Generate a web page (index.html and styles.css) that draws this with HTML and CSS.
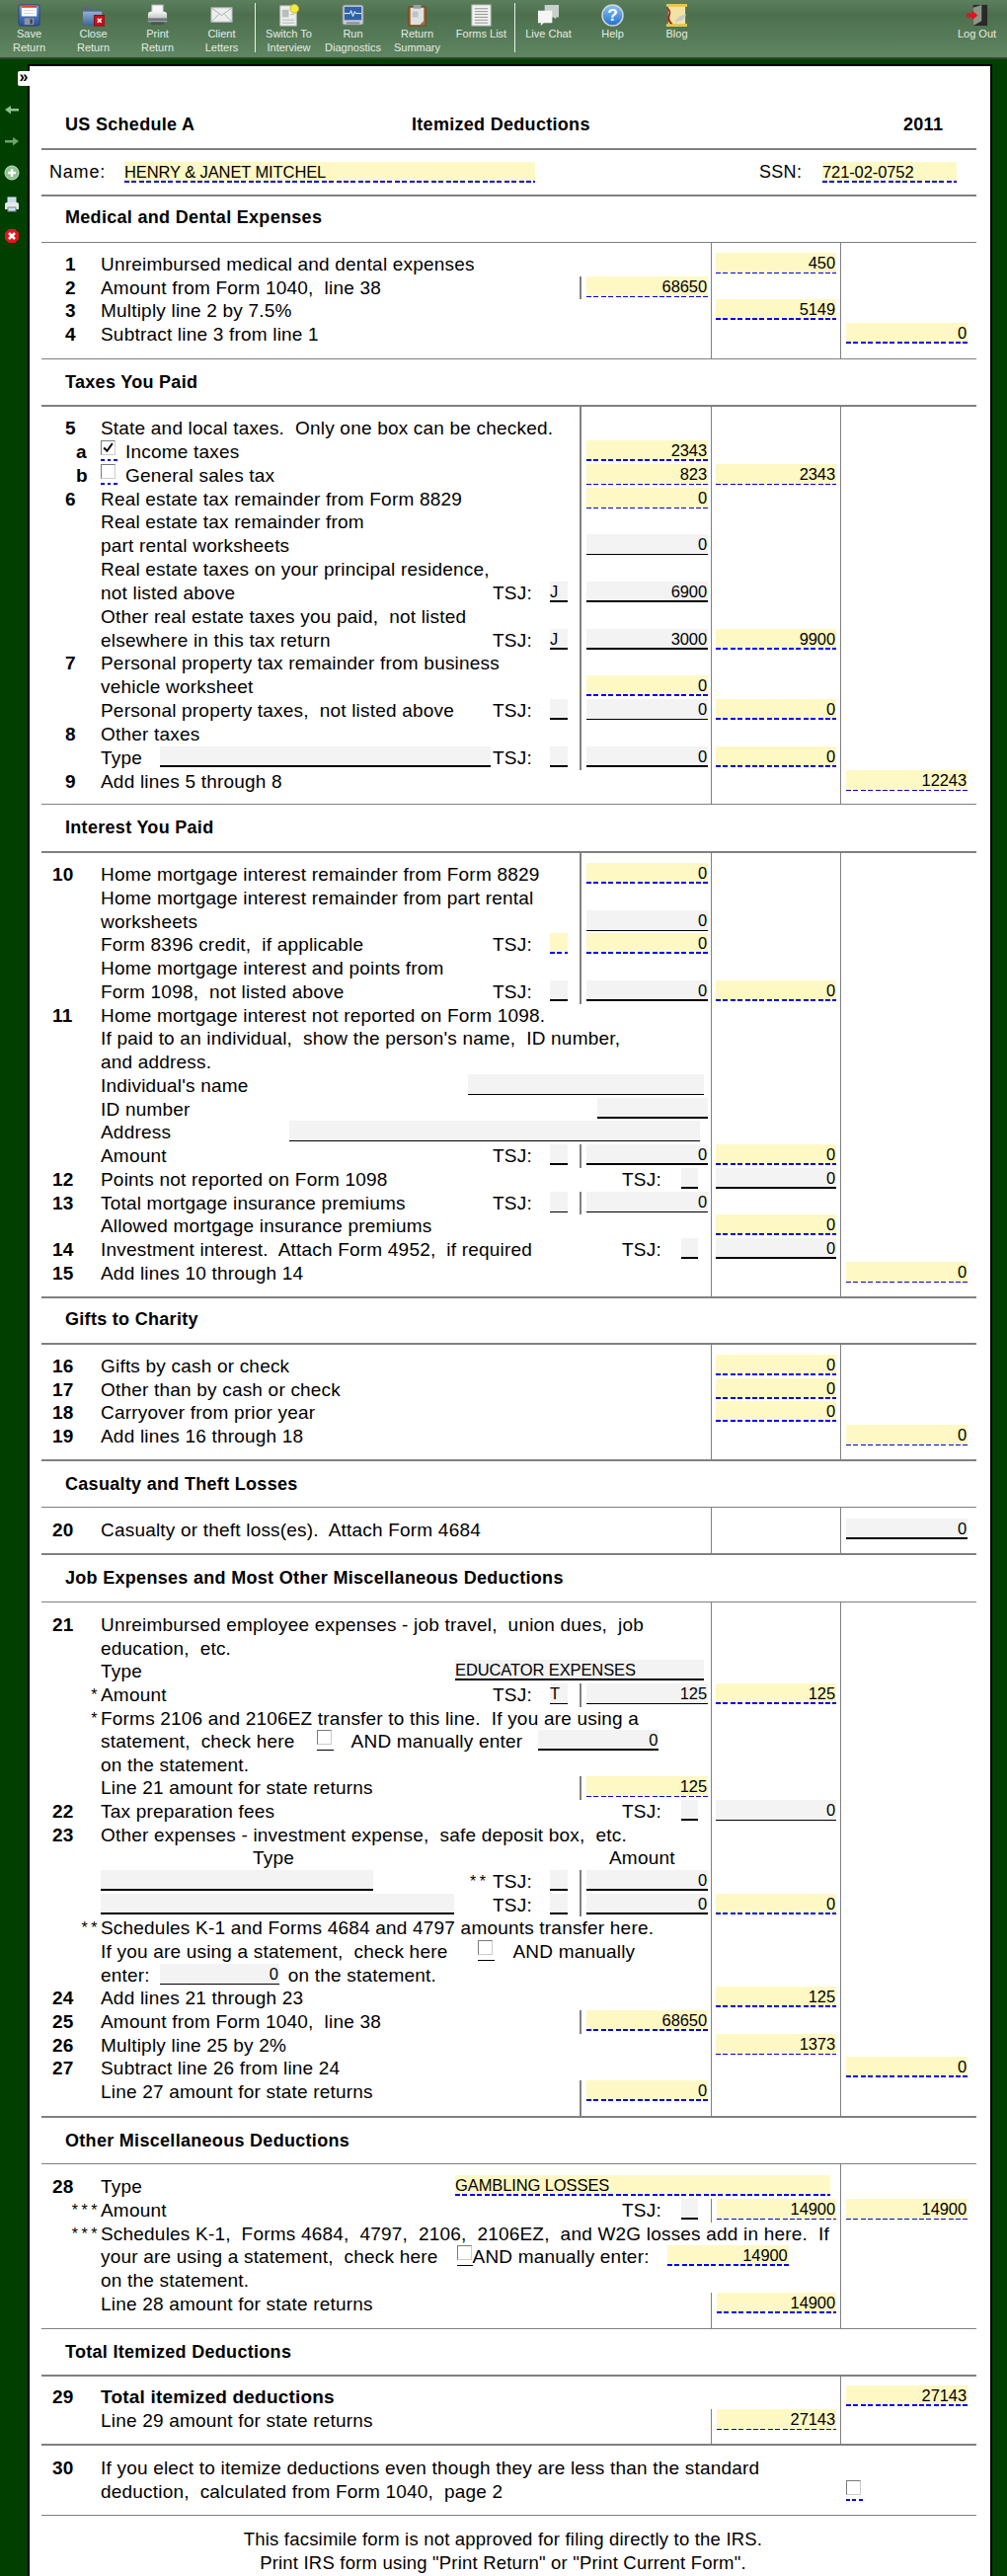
FILE: index.html
```html
<!DOCTYPE html>
<html lang="en">
<head>
<meta charset="utf-8">
<title>US Schedule A</title>
<link rel="stylesheet" href="styles.css">
</head>
<body>
<svg class="defs" width="0" height="0" aria-hidden="true">
  <defs>
    <linearGradient id="gBlue" x1="0" y1="0" x2="0" y2="1"><stop offset="0" stop-color="#6f9bd8"/><stop offset="1" stop-color="#2c4f96"/></linearGradient>
    <linearGradient id="gGrey" x1="0" y1="0" x2="0" y2="1"><stop offset="0" stop-color="#f4f4f4"/><stop offset="1" stop-color="#a9aeb0"/></linearGradient>
    <linearGradient id="gFolder" x1="0" y1="0" x2="0" y2="1"><stop offset="0" stop-color="#8fb0d8"/><stop offset="1" stop-color="#3f6496"/></linearGradient>
    <linearGradient id="gHelp" x1="0" y1="0" x2="0" y2="1"><stop offset="0" stop-color="#8cc4f2"/><stop offset="1" stop-color="#1f6fd0"/></linearGradient>
  </defs>
</svg>
<header class="toolbar">
  <div class="tool"><svg class="ticon" viewBox="0 0 24 24"><rect x="1" y="1" width="22" height="22" rx="2" fill="url(#gBlue)" stroke="#2a4478"/><rect x="4" y="2" width="16" height="11" fill="#fff"/><rect x="4" y="2" width="16" height="2" fill="#e0452f"/><path d="M6 7h12M6 10h12" stroke="#c9d2de"/><rect x="7" y="15" width="10" height="7" fill="#8f959c"/><rect x="13" y="16" width="2.5" height="5" fill="#3b4653"/></svg><span>Save<br>Return</span></div>
  <div class="tool"><svg class="ticon" viewBox="0 0 24 24"><path d="M1 5l1-2h7l2 3h9v4H1z" fill="#59677a"/><path d="M1 8h20v15H1z" fill="url(#gFolder)"/><rect x="13" y="12" width="11" height="11" fill="#c6121a" stroke="#7f0d12"/><path d="M16.5 15.5l4 4M20.500 15.500l-4 4" stroke="#fff" stroke-width="1.6"/></svg><span>Close<br>Return</span></div>
  <div class="tool"><svg class="ticon" viewBox="0 0 24 24"><rect x="6" y="1" width="12" height="8" fill="#f5f6f6" stroke="#aab"/><path d="M2 11q0-3 3-3h14q3 0 3 3v8H2z" fill="url(#gGrey)"/><rect x="2" y="15" width="20" height="3" fill="#6f7679"/><rect x="5" y="19" width="14" height="3" fill="#444d4f" opacity=".7"/></svg><span>Print<br>Return</span></div>
  <div class="tool"><svg class="ticon" viewBox="0 0 24 24"><rect x="1" y="4" width="22" height="15" fill="#eceeee" stroke="#b4babb"/><path d="M1 4l11 8 11-8M1 19l8-8M23 19l-8-8" fill="none" stroke="#a7adae"/></svg><span>Client<br>Letters</span></div>
  <i class="sep"></i>
  <div class="tool"><svg class="ticon" viewBox="0 0 24 24"><rect x="3" y="2" width="17" height="21" fill="#eef0ef" stroke="#c3c8c6"/><rect x="5" y="6" width="7" height="8" fill="#b9bebc"/><path d="M5 17h13M5 20h13M14 11h4" stroke="#c3c8c6" stroke-width="1.500"/><circle cx="18" cy="5" r="4.500" fill="#f3ec3a" stroke="#c4b92a"/></svg><span>Switch To<br>Interview</span></div>
  <div class="tool"><svg class="ticon" viewBox="0 0 24 24"><rect x="1" y="1" width="22" height="21" rx="2" fill="#c9ced2" stroke="#798086"/><rect x="3" y="3" width="18" height="14" fill="#2f62a8"/><path d="M3 10h6l1-3 2 6 2-5 1 2h6" fill="none" stroke="#fff"/><rect x="5" y="19" width="14" height="2" fill="#8b9298"/></svg><span>Run<br>Diagnostics</span></div>
  <div class="tool"><svg class="ticon" viewBox="0 0 24 24"><rect x="3" y="3" width="18" height="20" fill="#a8632c" stroke="#7b4418"/><rect x="5" y="4" width="14" height="18" fill="#dfe2e2"/><rect x="8" y="1" width="8" height="4" fill="#9aa0a3"/><path d="M7 8h6v6H7z" fill="#bcc1c2"/><path d="M15 22l4-4v4z" fill="#6f7476"/></svg><span>Return<br>Summary</span></div>
  <div class="tool"><svg class="ticon" viewBox="0 0 24 24"><rect x="2" y="1" width="20" height="22" fill="#f1f2f1" stroke="#b9bdbb"/><path d="M5 5h14M5 8h14M5 11h14M5 14h14M5 17h14M5 20h14" stroke="#8c9190"/></svg><span>Forms List</span></div>
  <i class="sep"></i>
  <div class="tool"><svg class="ticon" viewBox="0 0 24 24"><path d="M8 1h15v13h-3v2l-3-2H8z" fill="#c9cfcc"/><path d="M1 7h15v13H7l-3 3v-3H1z" fill="#f4f5f4"/></svg><span>Live Chat</span></div>
  <div class="tool"><svg class="ticon" viewBox="0 0 24 24"><circle cx="12" cy="12" r="11" fill="url(#gHelp)" stroke="#cfd6da" stroke-width="1.500"/><text x="12" y="18" text-anchor="middle" class="qmark">?</text></svg><span>Help</span></div>
  <div class="tool"><svg class="ticon" viewBox="0 0 24 24"><rect x="3" y="1" width="18" height="22" fill="#f2e3a5"/><rect x="1" y="0" width="22" height="3" fill="#e2c94a"/><rect x="1" y="21" width="22" height="3" fill="#e2c94a"/><path d="M2 3q5 4 3 9t3 9h-3q-4-5-2-9t-2-9z" fill="#a8201c"/><path d="M10 20q2-8 12-9-2 7-8 7z" fill="#c9cbc9"/></svg><span>Blog</span></div>
  <div class="tool tool-end"><svg class="ticon" viewBox="0 0 24 24"><path d="M8 1h15v22H8z" fill="#27292a"/><path d="M8 23V4l9-3v17z" fill="#8e9486"/><path d="M1 10h6V7l6 5-6 5v-3H1z" fill="#e0141c"/></svg><span>Log Out</span></div>
</header>

<div class="app">
  <nav class="side">
    <span class="tab">&raquo;</span>
    <svg class="sicon" viewBox="0 0 16 16"><path d="M1 8l6-4v3h8v2.500H7v3z" fill="#8fc08f"/></svg>
    <svg class="sicon" viewBox="0 0 16 16"><path d="M15 8l-6-4v3H1v2.500h8v3z" fill="#6fa36f"/></svg>
    <svg class="sicon" viewBox="0 0 16 16"><circle cx="8" cy="8" r="7" fill="#8dc28d" stroke="#cfe3cf"/><path d="M8 4v8M4 8h8" stroke="#fff" stroke-width="2.500"/></svg>
    <svg class="sicon" viewBox="0 0 16 16"><rect x="4" y="1" width="8" height="6" fill="#c8d8f0" stroke="#dfe6f3"/><path d="M1 8q0-2 2-2h10q2 0 2 2v5H1z" fill="#e6e9ea"/><rect x="4" y="11" width="8" height="4" fill="#cfe0f5" stroke="#7f8a90"/></svg>
    <svg class="sicon" viewBox="0 0 16 16"><path d="M5 1h6l4 4v6l-4 4H5l-4-4V5z" fill="#e3161c"/><path d="M5 5l6 6M11 5l-6 6" stroke="#fff" stroke-width="2.500"/></svg>
  </nav>

  <main class="sheet">
    <div class="title"><span class="t1">US Schedule A</span><span class="t2">Itemized Deductions</span><span class="t3">2011</span></div>
    <div class="idrow">
      <span class="idl">Name:</span><span class="f y namef txt">HENRY &amp; JANET MITCHEL</span>
      <span class="idl ssnl">SSN:</span><span class="f y ssnf txt">721-02-0752</span>
    </div>

    <h2 class="head h-med">Medical and Dental Expenses</h2>
    <section class="body lines b-med">
      <div class="row"><b class="num">1</b><div class="main">Unreimbursed medical and dental expenses</div><div class="c2"><span class="f y t">450</span></div></div>
      <div class="row"><b class="num">2</b><div class="main"><span class="lbl">Amount from Form 1040,  line 38</span><div class="sub b"><span class="f y t">68650</span></div></div></div>
      <div class="row"><b class="num">3</b><div class="main">Multiply line 2 by 7.5%</div><div class="c2"><span class="f y">5149</span></div></div>
      <div class="row"><b class="num">4</b><div class="main">Subtract line 3 from line 1</div><div class="c3"><span class="f y">0</span></div></div>
    </section>

    <h2 class="head">Taxes You Paid</h2>
    <section class="body lines thick-top b-tax">
      <div class="row"><b class="num">5</b><div class="main"><span class="lbl">State and local taxes.  Only one box can be checked.</span><div class="sub b up"></div></div></div>
      <div class="row"><b class="num let">a</b><div class="main"><span class="chk y-u"><i class="box"><svg class="tick" viewBox="0 0 12 12"><path d="M2 6l3 3 5-7" fill="none" stroke="#000" stroke-width="1.800"/></svg></i></span><span class="lbl after-chk">Income taxes</span><div class="sub b"><span class="f y">2343</span></div></div></div>
      <div class="row"><b class="num let">b</b><div class="main"><span class="chk y-u"><i class="box"></i></span><span class="lbl after-chk">General sales tax</span><div class="sub b"><span class="f y t">823</span></div></div><div class="c2"><span class="f y t">2343</span></div></div>
      <div class="row"><b class="num">6</b><div class="main"><span class="lbl">Real estate tax remainder from Form 8829</span><div class="sub b"><span class="f y t">0</span></div></div></div>
      <div class="row"><div class="main"><span class="lbl">Real estate tax remainder from</span><div class="sub b"></div></div></div>
      <div class="row"><div class="main"><span class="lbl">part rental worksheets</span><div class="sub b"><span class="f g t">0</span></div></div></div>
      <div class="row"><div class="main"><span class="lbl">Real estate taxes on your principal residence,</span><div class="sub b"></div></div></div>
      <div class="row"><div class="main"><span class="lbl">not listed above</span><div class="tsj">TSJ:<span class="f g tb">J</span></div><div class="sub b"><span class="f g">6900</span></div></div></div>
      <div class="row"><div class="main"><span class="lbl">Other real estate taxes you paid,  not listed</span><div class="sub b"></div></div></div>
      <div class="row"><div class="main"><span class="lbl">elsewhere in this tax return</span><div class="tsj">TSJ:<span class="f g tb">J</span></div><div class="sub b"><span class="f g">3000</span></div></div><div class="c2"><span class="f y">9900</span></div></div>
      <div class="row"><b class="num">7</b><div class="main"><span class="lbl">Personal property tax remainder from business</span><div class="sub b"></div></div></div>
      <div class="row"><div class="main"><span class="lbl">vehicle worksheet</span><div class="sub b"><span class="f y">0</span></div></div></div>
      <div class="row"><div class="main"><span class="lbl">Personal property taxes,  not listed above</span><div class="tsj">TSJ:<span class="f g tb"></span></div><div class="sub b"><span class="f g t">0</span></div></div><div class="c2"><span class="f y">0</span></div></div>
      <div class="row"><b class="num">8</b><div class="main"><span class="lbl">Other taxes</span><div class="sub b"></div></div></div>
      <div class="row"><div class="main"><span class="lbl">Type</span><span class="f g w-type"></span><div class="tsj">TSJ:<span class="f g tb"></span></div><div class="sub b"><span class="f g">0</span></div></div><div class="c2"><span class="f y">0</span></div></div>
      <div class="row"><b class="num">9</b><div class="main">Add lines 5 through 8</div><div class="c3"><span class="f y t">12243</span></div></div>
    </section>

    <h2 class="head h-int">Interest You Paid</h2>
    <section class="body lines thick-top thick-bot b-int">
      <div class="row"><b class="num n2">10</b><div class="main"><span class="lbl">Home mortgage interest remainder from Form 8829</span><div class="sub b up"><span class="f y">0</span></div></div></div>
      <div class="row"><div class="main"><span class="lbl">Home mortgage interest remainder from part rental</span><div class="sub b"></div></div></div>
      <div class="row"><div class="main"><span class="lbl">worksheets</span><div class="sub b"><span class="f g t">0</span></div></div></div>
      <div class="row"><div class="main"><span class="lbl">Form 8396 credit,  if applicable</span><div class="tsj">TSJ:<span class="f y tb"></span></div><div class="sub b"><span class="f y">0</span></div></div></div>
      <div class="row"><div class="main"><span class="lbl">Home mortgage interest and points from</span><div class="sub b"></div></div></div>
      <div class="row"><div class="main"><span class="lbl">Form 1098,  not listed above</span><div class="tsj">TSJ:<span class="f g tb"></span></div><div class="sub b"><span class="f g">0</span></div></div><div class="c2"><span class="f y">0</span></div></div>
      <div class="row"><b class="num n2">11</b><div class="main">Home mortgage interest not reported on Form 1098.</div></div>
      <div class="row"><div class="main">If paid to an individual,  show the person's name,  ID number,</div></div>
      <div class="row"><div class="main">and address.</div></div>
      <div class="row"><div class="main"><span class="lbl">Individual's name</span><span class="f g t w-ind"></span></div></div>
      <div class="row"><div class="main"><span class="lbl">ID number</span><span class="f g w-idn"></span></div></div>
      <div class="row"><div class="main"><span class="lbl">Address</span><span class="f g t w-addr"></span></div></div>
      <div class="row"><div class="main"><span class="lbl">Amount</span><div class="tsj">TSJ:<span class="f g tb"></span></div><div class="sub b"><span class="f g">0</span></div></div><div class="c2"><span class="f y">0</span></div></div>
      <div class="row"><b class="num n2">12</b><div class="main"><span class="lbl">Points not reported on Form 1098</span><div class="tsj2">TSJ:<span class="f g tb2"></span></div></div><div class="c2"><span class="f g">0</span></div></div>
      <div class="row"><b class="num n2">13</b><div class="main"><span class="lbl">Total mortgage insurance premiums</span><div class="tsj">TSJ:<span class="f g tb t"></span></div><div class="sub b"><span class="f g t">0</span></div></div></div>
      <div class="row"><div class="main">Allowed mortgage insurance premiums</div><div class="c2"><span class="f y">0</span></div></div>
      <div class="row"><b class="num n2">14</b><div class="main"><span class="lbl">Investment interest.  Attach Form 4952,  if required</span><div class="tsj2">TSJ:<span class="f g tb2"></span></div></div><div class="c2"><span class="f g">0</span></div></div>
      <div class="row"><b class="num n2">15</b><div class="main">Add lines 10 through 14</div><div class="c3"><span class="f y t">0</span></div></div>
    </section>

    <h2 class="head h-gift">Gifts to Charity</h2>
    <section class="body lines thick-top thick-bot b-gift">
      <div class="row"><b class="num n2">16</b><div class="main">Gifts by cash or check</div><div class="c2"><span class="f y">0</span></div></div>
      <div class="row"><b class="num n2">17</b><div class="main">Other than by cash or check</div><div class="c2"><span class="f y">0</span></div></div>
      <div class="row"><b class="num n2">18</b><div class="main">Carryover from prior year</div><div class="c2"><span class="f y">0</span></div></div>
      <div class="row"><b class="num n2">19</b><div class="main">Add lines 16 through 18</div><div class="c3"><span class="f y t">0</span></div></div>
    </section>

    <h2 class="head">Casualty and Theft Losses</h2>
    <section class="body lines thick-bot b-cas">
      <div class="row"><b class="num n2">20</b><div class="main">Casualty or theft loss(es).  Attach Form 4684</div><div class="c3"><span class="f g">0</span></div></div>
    </section>

    <h2 class="head h-job">Job Expenses and Most Other Miscellaneous Deductions</h2>
    <section class="body lines thick-bot b-job">
      <div class="row"><b class="num n2">21</b><div class="main">Unreimbursed employee expenses - job travel,  union dues,  job</div></div>
      <div class="row"><div class="main">education,  etc.</div></div>
      <div class="row"><div class="main"><span class="lbl">Type</span><span class="f g txt w-edu">EDUCATOR EXPENSES</span></div></div>
      <div class="row"><span class="num star">*</span><div class="main"><span class="lbl">Amount</span><div class="tsj">TSJ:<span class="f g tb t">T</span></div><div class="sub b"><span class="f g t">125</span></div></div><div class="c2"><span class="f y">125</span></div></div>
      <div class="row"><span class="num star">*</span><div class="main">Forms 2106 and 2106EZ transfer to this line.  If you are using a</div></div>
      <div class="row"><div class="main"><span class="lbl lbl-chk1">statement,  check here</span><span class="chk k-u"><i class="box"></i></span><span class="lbl and1">AND manually enter</span><span class="f g w-man">0</span></div></div>
      <div class="row"><div class="main">on the statement.</div></div>
      <div class="row"><div class="main"><span class="lbl">Line 21 amount for state returns</span><div class="sub b"><span class="f y t">125</span></div></div></div>
      <div class="row"><b class="num n2">22</b><div class="main"><span class="lbl">Tax preparation fees</span><div class="tsj2">TSJ:<span class="f g tb2"></span></div></div><div class="c2"><span class="f g t">0</span></div></div>
      <div class="row"><b class="num n2">23</b><div class="main">Other expenses - investment expense,  safe deposit box,  etc.</div></div>
      <div class="row"><div class="main"><span class="hd-type">Type</span><span class="hd-amt">Amount</span></div></div>
      <div class="row"><div class="main"><span class="f g w-o1"></span><div class="tsj tsj-s"><span class="stars">**</span>TSJ:<span class="f g tb"></span></div><div class="sub b"><span class="f g">0</span></div></div></div>
      <div class="row"><div class="main"><span class="f g w-o2"></span><div class="tsj">TSJ:<span class="f g tb"></span></div><div class="sub b"><span class="f g">0</span></div></div><div class="c2"><span class="f y">0</span></div></div>
      <div class="row"><span class="num star">**</span><div class="main">Schedules K-1 and Forms 4684 and 4797 amounts transfer here.</div></div>
      <div class="row"><div class="main"><span class="lbl lbl-chk2">If you are using a statement,  check here</span><span class="chk k-u"><i class="box"></i></span><span class="lbl and1">AND manually</span></div></div>
      <div class="row"><div class="main"><span class="lbl">enter:</span><span class="f g t w-ent">0</span><span class="lbl">on the statement.</span></div></div>
      <div class="row"><b class="num n2">24</b><div class="main">Add lines 21 through 23</div><div class="c2"><span class="f y">125</span></div></div>
      <div class="row"><b class="num n2">25</b><div class="main"><span class="lbl">Amount from Form 1040,  line 38</span><div class="sub b"><span class="f y">68650</span></div></div></div>
      <div class="row"><b class="num n2">26</b><div class="main">Multiply line 25 by 2%</div><div class="c2"><span class="f y t">1373</span></div></div>
      <div class="row"><b class="num n2">27</b><div class="main">Subtract line 26 from line 24</div><div class="c3"><span class="f y">0</span></div></div>
      <div class="row"><div class="main"><span class="lbl">Line 27 amount for state returns</span><div class="sub b dn"><span class="f y">0</span></div></div></div>
    </section>

    <h2 class="head">Other Miscellaneous Deductions</h2>
    <section class="body lines3 b-oth">
      <div class="row"><b class="num n2">28</b><div class="main wide"><span class="lbl">Type</span><span class="f y txt w-gam">GAMBLING LOSSES</span></div></div>
      <div class="row"><span class="num star">***</span><div class="main"><span class="lbl">Amount</span><div class="tsj2">TSJ:<span class="f g tb2"></span></div></div><div class="c2 seg"><span class="f y t">14900</span></div><div class="c3"><span class="f y t">14900</span></div></div>
      <div class="row"><span class="num star">***</span><div class="main wide">Schedules K-1,  Forms 4684,  4797,  2106,  2106EZ,  and W2G losses add in here.  If</div></div>
      <div class="row"><div class="main wide"><span class="lbl lbl-chk3">your are using a statement,  check here</span><span class="chk k-u tight"><i class="box"></i></span><span class="lbl">AND manually enter:</span><span class="f y w-man3">14900</span></div></div>
      <div class="row"><div class="main">on the statement.</div></div>
      <div class="row ext"><div class="main">Line 28 amount for state returns</div><div class="c2 seg"><span class="f y">14900</span></div></div>
    </section>

    <h2 class="head">Total Itemized Deductions</h2>
    <section class="body lines3 thick-top thick-bot b-tot">
      <div class="row"><b class="num n2">29</b><div class="main"><b class="lbl">Total itemized deductions</b></div><div class="c3"><span class="f y">27143</span></div></div>
      <div class="row ext"><div class="main">Line 29 amount for state returns</div><div class="c2 seg"><span class="f y t">27143</span></div></div>
    </section>

    <section class="body b-30">
      <div class="row"><b class="num n2">30</b><div class="main wide">If you elect to itemize deductions even though they are less than the standard</div></div>
      <div class="row"><div class="main">deduction,  calculated from Form 1040,  page 2</div><div class="c3"><span class="chk y-u"><i class="box"></i></span></div></div>
    </section>

    <footer class="foot">This facsimile form is not approved for filing directly to the IRS.<br>Print IRS form using "Print Return" or "Print Current Form".</footer>
  </main>
</div>
</body>
</html>
```

FILE: styles.css
```css
* { box-sizing: border-box; }
html, body { margin: 0; height: 2609px; overflow: hidden; }
body { background: #003f00; color: #000; font-family: "Liberation Sans", Arial, sans-serif; }
.defs { position: absolute; }

.toolbar { display: flex; height: 60px; margin-left: -3px; margin-right: -2px;
  background: linear-gradient(#5b7f5d 0, #4d6f4e 25%, #5f8561 100%); border-bottom: 2px solid #2c472c; }
.tool { width: 65px; display: flex; flex-direction: column; align-items: center; padding-top: 4px;
  font-size: 11px; line-height: 14px; color: #e4ece4; text-align: center; }
.tool span { white-space: nowrap; }
.tool-end { margin-left: auto; }
.ticon { width: 23px; height: 23px; display: block; }
.qmark { font: bold 18px "Liberation Sans", sans-serif; fill: #fff; }
.sep { width: 3px; flex: none; margin: 3px 0 5px; background: linear-gradient(90deg, transparent 1px, #e8efe8 1px, #e8efe8 2px, transparent 2px); }

.app { display: flex; }
.side { width: 28px; flex: none; position: relative; padding-top: 43px; display: flex; flex-direction: column; align-items: center; gap: 16px; }
.sicon { width: 16px; height: 16px; display: block; margin-left: -4px; }
.tab { position: absolute; left: 18px; top: 12px; width: 12px; height: 15px; background: #fff; color: #000; border-radius: 2px 0 0 2px;
  font: bold 16px/12px "Liberation Sans", sans-serif; text-align: center; }

.sheet { width: 977px; margin-top: 5px; height: 2560px; background: #fff; border: 2px solid #000; border-bottom: 0; padding: 0 14px 0 12px;
  font-size: 19px; letter-spacing: .2px; }

.title { height: 85px; padding: 47px 0 0 24px; display: flex; font-size: 18px; font-weight: bold; line-height: 24px; border-bottom: 2px solid #808080; letter-spacing: .3px; }
.t1 { width: 351px; }
.t2 { width: 498px; }
.idrow { height: 47px; border-bottom: 2px solid #808080; display: flex; align-items: center; padding-left: 8px; font-size: 18px; }
.idl { width: 76px; letter-spacing: .8px; }
.ssnl { width: 64px; margin-left: 227px; letter-spacing: .3px; }
.namef { width: 416px; }
.ssnf { width: 136px; }

.head { margin: 0; height: 47px; padding-left: 24px; font-size: 18px; line-height: 46px; font-weight: bold; letter-spacing: .3px; border-bottom: 1px solid #808080; }
.h-med { line-height: 42px; }
.h-int { height: 48px; }
.h-gift { height: 46px; line-height: 42px; }
.h-job { height: 48px; }

.body { border-bottom: 1px solid #808080; padding-top: 11px; }
.thick-top { border-top: 2px solid #808080; margin-top: -1px; padding-top: 10px; }
.thick-bot { border-bottom-width: 2px; }
.lines { background: linear-gradient(#808080, #808080) 678px 0 / 1px 100% no-repeat, linear-gradient(#808080, #808080) 809px 0 / 1px 100% no-repeat; }
.lines3 { background: linear-gradient(#808080, #808080) 809px 0 / 1px 100% no-repeat; }

.b-med { height: 118px; padding-top: 10px; }
.b-tax { height: 405px; --h: 23.85px; }
.b-int { height: 453px; --h: 23.75px; }
.b-gift { height: 120px; }
.b-cas { height: 48px; }
.b-job { height: 522px; --h: 23.65px; }
.b-oth { height: 167px; --h: 23.75px; }
.b-tot { height: 72px; padding-top: 9px; }
.b-30 { height: 71px; }

.row { display: grid; grid-template-columns: 60px 618px 131px 138px; height: var(--h, 23.7px); line-height: 23.7px; }
.row > * { grid-row: 1; }
.row.ext { height: 36px; }
.num { grid-column: 1; padding-left: 24px; }
.let { padding-left: 35px; }
.n2 { padding-left: 11px; }
.star { text-align: right; padding: 0; font-size: 16px; letter-spacing: 3.5px; }
.main { grid-column: 2; display: flex; white-space: pre; }
.main.wide { grid-column: 2 / span 2; }
.c2 { grid-column: 3; padding: 0 4px 0 5px; }
.c3 { grid-column: 4; padding: 0 9px 0 6px; }
.seg { border-left: 1px solid #808080; }
.lbl { flex: none; }
.sub { width: 133px; flex: none; margin-left: auto; padding: 0 3px 0 5px; border-left: 2px solid transparent; }
.sub.b { border-left-color: #808080; }
.sub.up { margin-top: -10px; padding-top: 10px; }
.sub.dn { margin-bottom: -12px; }
.tsj { width: 88px; flex: none; margin-left: auto; display: flex; padding-right: 12px; justify-content: space-between; }
.tsj + .sub { margin-left: 0; }
.tsj2 { width: 90px; flex: none; display: flex; justify-content: space-between; padding-right: 13px; margin-left: auto; }
.tsj-s { position: relative; }
.stars { position: absolute; left: -23px; font-size: 16px; letter-spacing: 3.5px; }

.f { display: block; height: 21px; line-height: 20px; font-size: 16.5px; letter-spacing: -.1px; text-align: right; padding-right: 1px; flex: none; overflow: hidden; }
.y { --dh: 2px; background:
    repeating-linear-gradient(90deg, #0000f0 0 5px, transparent 5px 7.4px) 0 100% / 100% var(--dh) no-repeat,
    linear-gradient(#fef9c4, #fef9c4) 0 0 / 100% calc(100% - var(--dh)) no-repeat; }
.y.t { --dh: 1px; }
.g { background: #f3f3f3; border-bottom: 2px solid #000; }
.g.t { border-bottom-width: 1px; }
.txt { text-align: left; padding: 0; }
.tb { width: 18px; text-align: left; padding: 0; }
.tb2 { width: 17px; }

.w-type { width: 335px; margin: 0 2px 0 auto; }
.w-type + .tsj { margin-left: 0; }
.w-ind { width: 239px; margin: 0 7px 0 auto; }
.w-idn { width: 112px; margin: 0 3px 0 auto; }
.w-addr { width: 416px; margin: 0 11px 0 auto; }
.w-edu { width: 252px; margin: 0 7px 0 auto; }
.w-man { width: 122px; margin-left: 16px; }
.w-ent { width: 121px; margin: 0 9px 0 10px; }
.w-o1 { width: 276px; }
.w-o2 { width: 358px; }
.w-gam { width: 380px; margin: 0 10px 0 auto; }
.w-man3 { width: 123px; margin-left: 18px; }
.hd-type { margin-left: 154px; }
.hd-amt { margin-left: 319px; }

.chk { display: block; width: 17px; height: 21px; flex: none; }
.chk.tight { width: 16px; }
.box { display: block; width: 15px; height: 15px; background: #fff; border: 1px solid #7a7a7a; border-right-color: #ccc; border-bottom-color: #ccc; }
.tick { display: block; width: 13px; height: 13px; }
.y-u { background: repeating-linear-gradient(90deg, #0000f0 0 4px, transparent 4px 6.500px) 0 100% / 100% 2px no-repeat; }
.k-u { border-bottom: 1px solid #000; }
.after-chk { margin-left: 8px; }
.lbl-chk1 { margin-right: 22px; }
.lbl-chk2 { margin-right: 31px; }
.lbl-chk3 { margin-right: 19px; }
.and1 { margin-left: 18px; }

.foot { text-align: center; font-size: 18.5px; line-height: 24px; padding: 12px 12px 0 0; }
```
